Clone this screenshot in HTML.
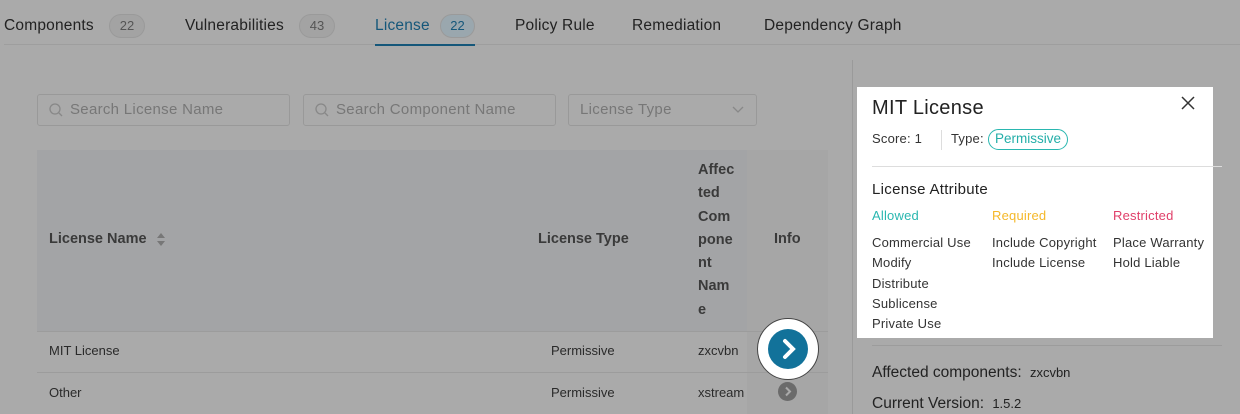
<!DOCTYPE html>
<html><head><style>
*{box-sizing:border-box;margin:0;padding:0}
body{width:1240px;height:414px;overflow:hidden;background:#aaaaaa;font-family:"Liberation Sans",sans-serif;position:relative;color:#2a2a2a}
.a{position:absolute;white-space:nowrap}
.tab{font-size:15.5px;top:17px;color:#222;letter-spacing:0.2px}
.badge{position:absolute;top:14px;height:24px;border-radius:12px;background:#a3a3a3;border:1px solid #9a9a9a;font-size:13px;color:#555;text-align:center;line-height:22px}
.inp{position:absolute;top:94px;height:32px;border:1px solid #999;border-radius:3px;font-size:15px;color:#777;line-height:30px;padding-left:32px;letter-spacing:0.3px}
.inp svg{position:absolute;left:11px;top:8px}
.th{font-size:14.5px;font-weight:bold;color:#3a3a3a}
.td{font-size:13px;color:#2a2a2a}
.p{font-size:13px;color:#333;letter-spacing:0.2px}
</style></head><body>
<div class="a tab" style="left:4px">Components</div><div class="badge" style="left:109px;width:36px">22</div>
<div class="a tab" style="left:185px">Vulnerabilities</div><div class="badge" style="left:299px;width:36px">43</div>
<div class="a tab" style="left:375px;color:#15577a">License</div><div class="badge" style="left:440px;width:35px;background:#9aa7ae;color:#15577a">22</div>
<div class="a tab" style="left:515px">Policy Rule</div>
<div class="a tab" style="left:632px">Remediation</div>
<div class="a tab" style="left:764px">Dependency Graph</div>
<div class="a" style="left:4px;top:44px;width:1236px;height:1px;background:#9e9e9e"></div>
<div class="a" style="left:375px;top:44px;width:100px;height:2px;background:#15577a"></div>

<div class="inp" style="left:37px;width:253px"><svg width="14" height="14" viewBox="0 0 14 14" fill="none" stroke="#888" stroke-width="1.3"><circle cx="6" cy="6" r="5"/><path d="M10 10l3 3"/></svg>Search License Name</div>
<div class="inp" style="left:303px;width:253px"><svg width="14" height="14" viewBox="0 0 14 14" fill="none" stroke="#888" stroke-width="1.3"><circle cx="6" cy="6" r="5"/><path d="M10 10l3 3"/></svg>Search Component Name</div>
<div class="inp" style="left:568px;width:189px;padding-left:11px">License Type<svg style="left:auto;right:12px;top:11px" width="12" height="8" viewBox="0 0 12 8" fill="none" stroke="#888" stroke-width="1.3"><path d="M1 1l5 5 5-5"/></svg></div>

<div class="a" style="left:37px;top:150px;width:791px;height:181px;background:#a3a4a6"></div>
<div class="a" style="left:747px;top:150px;width:81px;height:264px;background:#a6a6a6"></div>
<div class="a" style="left:37px;top:331px;width:791px;height:1px;background:#9c9c9c"></div>
<div class="a" style="left:37px;top:372px;width:791px;height:1px;background:#9c9c9c"></div>
<div class="a th" style="left:49px;top:231px">License Name</div>
<svg class="a" style="left:156px;top:233px" width="10" height="13" viewBox="0 0 10 13" fill="#777"><path d="M5 0l4 5H1zM5 13l4-5H1z"/></svg>
<div class="a th" style="left:538px;top:231px">License Type</div>
<div class="a th" style="left:698px;top:159px;line-height:23.3px;white-space:normal;width:40px">Affec<br>ted<br>Com<br>pone<br>nt<br>Nam<br>e</div>
<div class="a th" style="left:774px;top:231px">Info</div>
<div class="a td" style="left:49px;top:343px">MIT License</div>
<div class="a td" style="left:551px;top:343px">Permissive</div>
<div class="a td" style="left:698px;top:343px">zxcvbn</div>
<div class="a td" style="left:49px;top:385px">Other</div>
<div class="a td" style="left:551px;top:385px">Permissive</div>
<div class="a td" style="left:698px;top:385px">xstream</div>
<div class="a" style="left:778px;top:382px;width:19px;height:19px;border-radius:50%;background:#6b6b6b"><svg width="19" height="19" viewBox="0 0 19 19" fill="none" stroke="#aaa" stroke-width="2"><path d="M8 5.5l4 4-4 4"/></svg></div>
<div class="a" style="left:757px;top:318px;width:62px;height:62px;border-radius:50%;background:#fff;border:1px solid #444"></div>
<div class="a" style="left:768px;top:329px;width:40px;height:40px;border-radius:50%;background:#12729a"><svg width="40" height="40" viewBox="0 0 40 40" fill="none" stroke="#fff" stroke-width="4" stroke-linecap="round"><path d="M17 12l8 8-8 8"/></svg></div>

<div class="a" style="left:852px;top:60px;width:1px;height:354px;background:#9a9a9a"></div>
<div class="a" style="left:872px;top:345px;width:350px;height:1px;background:#9c9c9c"></div>
<div class="a" style="left:872px;top:364px;font-size:15.5px;color:#222">Affected components: <span style="font-size:13px;margin-left:4px">zxcvbn</span></div>
<div class="a" style="left:872px;top:395px;font-size:15.5px;color:#222">Current Version: <span style="font-size:13px;margin-left:4px">1.5.2</span></div>

<div class="a" style="left:857px;top:87px;width:356px;height:251px;background:#fff"></div>
<div class="a" style="left:872px;top:97px;font-size:20px;color:#222;letter-spacing:0.3px">MIT License</div>
<svg class="a" style="left:1181px;top:96px" width="14" height="14" viewBox="0 0 14 14" stroke="#333" stroke-width="1.5"><path d="M1 1l12 12M13 1L1 13"/></svg>
<div class="a p" style="left:872px;top:131px">Score: 1</div>
<div class="a" style="left:941px;top:130px;width:1px;height:20px;background:#ddd"></div>
<div class="a p" style="left:951px;top:131px">Type:</div>
<div class="a" style="left:988px;top:129px;height:21px;border:1.5px solid #2ab7b0;border-radius:11px;padding:0 6px;font-size:13.5px;line-height:18px;color:#23aea8">Permissive</div>
<div class="a" style="left:872px;top:166px;width:350px;height:1px;background:#ddd"></div>
<div class="a" style="left:872px;top:181px;font-size:15px;color:#222;letter-spacing:0.3px">License Attribute</div>
<div class="a p" style="left:872px;top:208px;color:#2ab7b0">Allowed</div>
<div class="a p" style="left:992px;top:208px;color:#f5b82a">Required</div>
<div class="a p" style="left:1113px;top:208px;color:#e0406a">Restricted</div>
<div class="a p" style="left:872px;top:233px;line-height:20.3px">Commercial Use<br>Modify<br>Distribute<br>Sublicense<br>Private Use</div>
<div class="a p" style="left:992px;top:233px;line-height:20.3px">Include Copyright<br>Include License</div>
<div class="a p" style="left:1113px;top:233px;line-height:20.3px">Place Warranty<br>Hold Liable</div>
</body></html>
